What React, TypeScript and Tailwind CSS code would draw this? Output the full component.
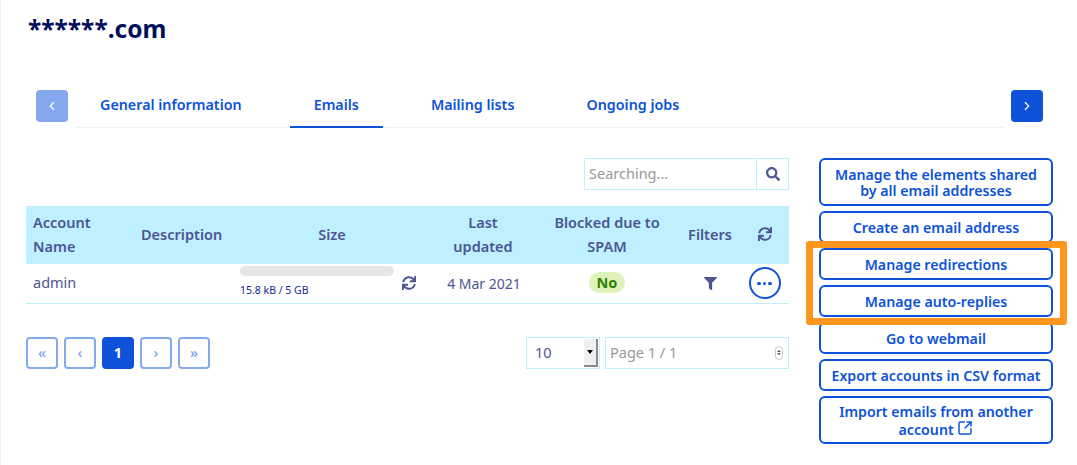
import { ChevronLeft, ChevronRight, SquareArrowOutUpRight } from 'lucide-react'
import { FaFilter, FaSearch, FaSync } from 'react-icons/fa'

const actions = [
  'Manage the elements shared\nby all email addresses',
  'Create an email address',
  'Manage redirections',
  'Manage auto-replies',
  'Go to webmail',
  'Export accounts in CSV format',
]

const tabs = ['General information', 'Emails', 'Mailing lists', 'Ongoing jobs']
const pages = ['«', '‹', '1', '›', '»']

function Tabs() {
  return (
    <div className="mt-[43px] flex h-[38px] pl-[35px] pr-[34px]">
      <button className="flex size-8 items-center justify-center rounded-[4px] bg-[#85a9ef] text-white">
        <ChevronLeft size={14} strokeWidth={2} />
      </button>
      <div className="ml-2 flex h-[38px] w-[928px] gap-6 border-b border-[#ecf2fc]">
        {tabs.map((tab) => (
          <div
            key={tab}
            className={`h-[38px] px-6 pt-[3px] text-[14.3px] leading-6 font-semibold text-[#0d52d9] ${
              tab === 'Emails' ? 'border-b-2 border-[#0d52d9]' : ''
            }`}
          >
            {tab}
          </div>
        ))}
      </div>
      <button className="ml-[7px] flex size-8 items-center justify-center rounded-[4px] bg-[#0d52d9] text-white">
        <ChevronRight size={14} strokeWidth={2} />
      </button>
    </div>
  )
}

function AccountsTable() {
  return (
    <table className="mt-4 w-[763px] table-fixed border-collapse text-[#4d5592]">
      <colgroup>
        <col className="w-[108px]" />
        <col className="w-[98px]" />
        <col className="w-[168px]" />
        <col className="w-[32px]" />
        <col className="w-[102px]" />
        <col className="w-[146px]" />
        <col className="w-[60px]" />
        <col className="w-[49px]" />
      </colgroup>
      <thead>
        <tr className="h-[58px] bg-[#bef0ff] text-[14.5px] leading-6 font-semibold [&>th]:pb-[2px]">
          <th className="px-[7px] text-left font-semibold">Account Name</th>
          <th className="px-[7px] text-left font-semibold whitespace-nowrap">Description</th>
          <th colSpan={2} className="font-semibold">Size</th>
          <th className="font-semibold">
            Last
            <br />
            updated
          </th>
          <th className="font-semibold">
            Blocked due to
            <br />
            SPAM
          </th>
          <th className="font-semibold">Filters</th>
          <th>
            <FaSync size={14} className="mx-auto" />
          </th>
        </tr>
      </thead>
      <tbody>
        <tr className="h-[39px] border-b border-[#bef0ff] text-[14.5px]">
          <td className="px-[7px]">admin</td>
          <td />
          <td className="pl-2 align-top">
            <div className="mt-[2px] h-[10px] w-[154px] rounded-full bg-[#e6e6e6]" />
            <div className="mt-[7px] text-[10.5px] leading-[14px] text-[#122b8f]">15.8 kB / 5 GB</div>
          </td>
          <td>
            <FaSync size={14} className="mx-auto -translate-x-[7px]" />
          </td>
          <td className="text-center text-[14px]">
            <span className="pl-[2px]">4 Mar 2021</span>
          </td>
          <td className="text-center">
            <span className="inline-block h-[21px] rounded-full bg-[#ddf3bb] px-2 text-[14.5px] leading-[21px] font-bold text-[#2d8000]">
              No
            </span>
          </td>
          <td>
            <FaFilter size={13} className="mx-auto" />
          </td>
          <td>
            <div className="mx-auto flex size-8 items-center justify-center gap-[2px] rounded-full border-2 border-[#0d52d9]">
              <span className="size-[3.5px] rounded-full bg-[#0d52d9]" />
              <span className="size-[3.5px] rounded-full bg-[#0d52d9]" />
              <span className="size-[3.5px] rounded-full bg-[#0d52d9]" />
            </div>
          </td>
        </tr>
      </tbody>
    </table>
  )
}

function Pagination() {
  return (
    <div className="mt-[33px] flex justify-between">
      <div className="flex gap-[6px]">
        {pages.map((page) =>
          page === '1' ? (
            <div
              key={page}
              className="flex size-8 items-center justify-center rounded-[4px] bg-[#0d52d9] text-[14.5px] font-bold text-white"
            >
              {page}
            </div>
          ) : (
            <div
              key={page}
              className="flex size-8 items-center justify-center rounded-[4px] border-2 border-[#85a9ef] text-[14px] font-semibold text-[#85a9ef]"
            >
              {page}
            </div>
          ),
        )}
      </div>
      <div className="flex gap-[5px]">
        <div className="flex h-8 w-[74px] items-center justify-between border border-[#bef0ff] pl-[8px] pr-px text-[14.5px] text-[#4d5592]">
          10
          <div className="flex h-[28px] w-[14px] items-center justify-center border-r-2 border-b-2 border-[#8a8a8a] bg-[#efefef]">
            <span className="border-x-[3px] border-t-[4px] border-x-transparent border-t-black" />
          </div>
        </div>
        <div className="flex h-8 w-[184px] items-center justify-between border border-[#bef0ff] pl-1 pr-[5px] text-[14.5px] text-[#999999]">
          Page 1 / 1
          <div className="flex h-[14px] w-[8px] flex-col items-center justify-center gap-px rounded-full border border-[#c8c8c8] text-[#555555]">
            <span className="border-x-[2px] border-b-[2px] border-x-transparent border-b-current" />
            <span className="border-x-[2px] border-t-[2px] border-x-transparent border-t-current" />
          </div>
        </div>
      </div>
    </div>
  )
}

function Actions() {
  return (
    <div className="flex w-[234px] flex-col gap-[5px]">
      {actions.map((label) => (
        <button
          key={label}
          className="min-h-8 rounded-[6px] border-2 border-[#0d52d9] bg-white px-1 pt-[7px] pb-[5px] text-center text-[14.2px] leading-4 font-semibold whitespace-pre-line text-[#0d52d9]"
        >
          {label}
        </button>
      ))}
      <button className="h-12 rounded-[6px] border-2 border-[#0d52d9] bg-white px-1 pt-[2px] text-center text-[14.2px] leading-4 font-semibold text-[#0d52d9]">
        Import emails from another account{' '}
        <SquareArrowOutUpRight size={16} strokeWidth={2.2} className="inline align-[-1px]" />
      </button>
    </div>
  )
}

export default function App() {
  return (
    <div className="relative h-[465px] w-[1077px] overflow-hidden border-l border-[#f3f3f3] bg-white font-['Noto_Sans',sans-serif]">
      <h1 className="pl-[27px] pt-[11px] text-[24.5px] leading-9 font-bold text-[#000e5c]">******.com</h1>
      <Tabs />
      <div className="mt-[30px] flex gap-[30px] pl-[25px]">
        <div className="w-[763px]">
          <div className="flex justify-end">
            <div className="flex h-8 w-[205px] border border-[#bef0ff]">
              <div className="flex flex-1 items-center pl-1 text-[14.5px] text-[#999999]">Searching...</div>
              <div className="flex w-8 items-center justify-center border-l border-[#bef0ff] text-[#4d5592]">
                <FaSearch size={14} />
              </div>
            </div>
          </div>
          <AccountsTable />
          <Pagination />
        </div>
        <Actions />
      </div>
      <div className="absolute left-[805px] top-[241px] h-[84px] w-[261px] rounded-[3px] border-[7px] border-[#ff961e]" />
    </div>
  )
}
